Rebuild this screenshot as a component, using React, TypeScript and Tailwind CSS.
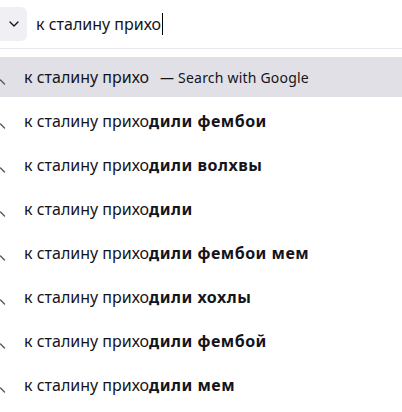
import { ChevronDown } from "lucide-react";

const suggestions = [
  "фембои",
  "волхвы",
  "",
  "фембои мем",
  "хохлы",
  "фембой",
  "мем",
];

// only the handle of the magnifier peeks in from the left edge
function SearchIcon() {
  return (
    <svg width="24" height="40" viewBox="0 0 24 40" className="shrink-0">
      <path d="M0.5 23 L4.5 27" stroke="#5b5b66" strokeWidth="1.5" strokeLinecap="round" />
    </svg>
  );
}

function App() {
  return (
    <div
      className="h-[412px] w-[402px] overflow-hidden bg-white text-[#15141a]"
      style={{ fontFamily: '"Noto Sans", "Open Sans", sans-serif' }}
    >
      {/* urlbar */}
      <div className="flex h-[48px] items-center">
        <div className="flex h-[34px] w-[27px] items-center justify-center rounded-r-md bg-[#f0f0f4]">
          <ChevronDown size={16} strokeWidth={2} className="text-[#15141a]" />
        </div>
        <div className="ml-[9px] flex items-center text-[16px]">
          <span>к сталину прихо</span>
          <span className="ml-px inline-block h-[22px] w-px bg-black" />
        </div>
      </div>
      <div className="h-px bg-[#e9e9ee]" />

      <div className="mt-2 flex flex-col gap-1">
        <div className="flex h-10 items-center bg-[#e0e0e6]">
          <SearchIcon />
          <span className="text-[16px]">к сталину прихо</span>
          <span className="ml-[11px] text-[14px] tracking-[0.2px]">— Search with Google</span>
        </div>
        {suggestions.map((s, i) => (
          <div key={i} className="flex h-10 items-center">
            <SearchIcon />
            <span className="text-[16px]">
              к сталину прихо
              <b className="font-bold tracking-[0.5px]">дили{s ? " " + s : ""}</b>
            </span>
          </div>
        ))}
      </div>
    </div>
  );
}

export default App;
